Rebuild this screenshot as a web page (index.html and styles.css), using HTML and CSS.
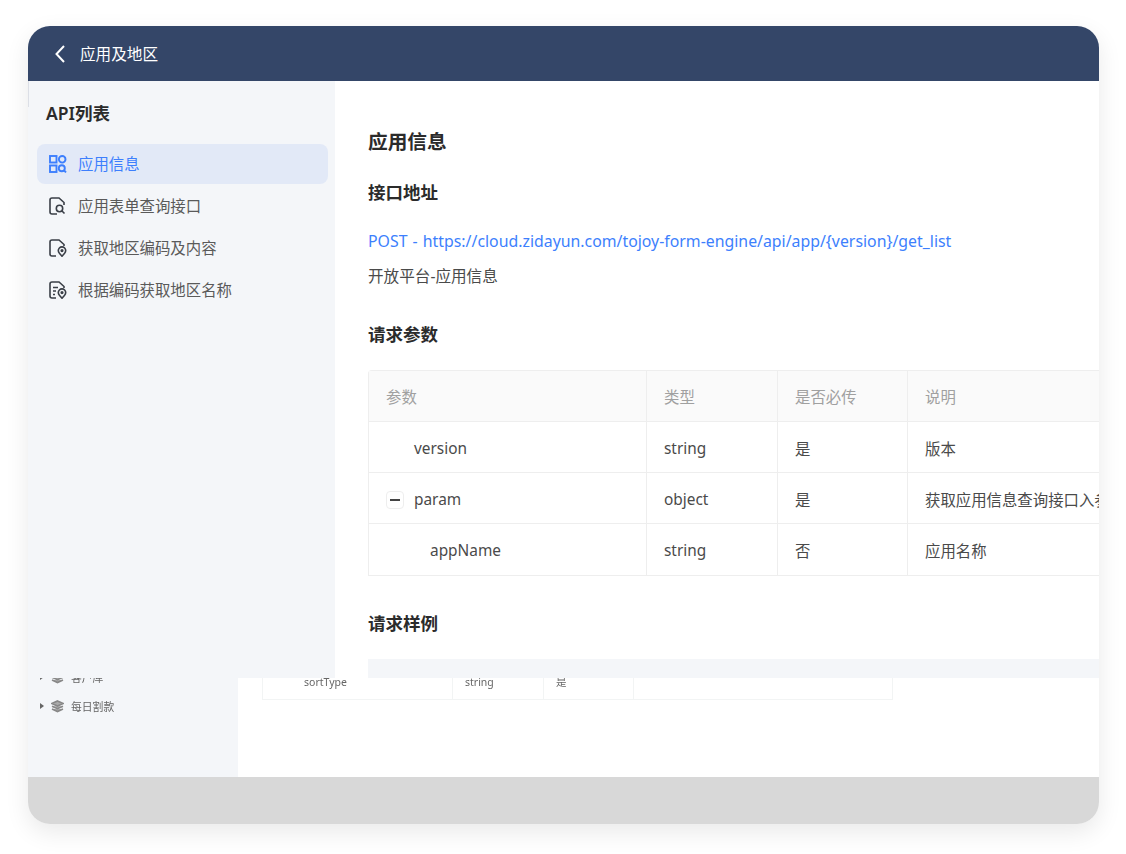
FILE: index.html
```html
<!DOCTYPE html>
<html lang="zh-CN">
<head>
  <meta charset="UTF-8" />
  <meta name="viewport" content="width=device-width, initial-scale=1.0"/>
  <title>应用及地区</title>
  <link rel="stylesheet" href="styles.css">
</head>
<body>
  <div class="window">
    <header class="topbar">
      <svg class="back-icon" width="12" height="20" viewBox="0 0 12 20"><path d="M10 2 L2.5 10 L10 18" /></svg>
      <span class="topbar-title">应用及地区</span>
    </header>

    <div class="content">
      <aside class="sidebar">
        <h2 class="sidebar-title">API列表</h2>
        <nav class="api-list">
          <a class="api-item active">
            <svg class="api-icon" width="18" height="18" viewBox="0 0 18 18">
              <rect x="1" y="1" width="6.5" height="6.5" />
              <circle cx="13.2" cy="4.3" r="3.3" />
              <rect x="1" y="10.5" width="6.5" height="6.5" />
              <circle cx="12.8" cy="13.2" r="3" />
              <path d="M15 15.4 L17 17.4" />
            </svg>
            <span class="api-label">应用信息</span>
          </a>
          <a class="api-item">
            <svg class="api-icon" width="18" height="18" viewBox="0 0 18 18">
              <path d="M8 17 H3 Q1 17 1 15 V3 Q1 1 3 1 H10 L15 5.5 V8" />
              <circle cx="10.5" cy="11.5" r="3.2" />
              <path d="M13 14 L15.5 16.5" />
            </svg>
            <span class="api-label">应用表单查询接口</span>
          </a>
          <a class="api-item">
            <svg class="api-icon" width="18" height="18" viewBox="0 0 18 18">
              <path d="M7 17 H3 Q1 17 1 15 V3 Q1 1 3 1 H10 L15 5.5 V7" />
              <path d="M13 17.2 L10.4 14.2 A3.7 3.7 0 1 1 15.6 14.2 Z" />
              <circle cx="13" cy="11.6" r="0.8" />
            </svg>
            <span class="api-label">获取地区编码及内容</span>
          </a>
          <a class="api-item">
            <svg class="api-icon" width="18" height="18" viewBox="0 0 18 18">
              <path d="M7 17 H3 Q1 17 1 15 V3 Q1 1 3 1 H10 L15 5.5 V7" />
              <path d="M4 6.5 H9 M4 10 H7 M4 13.5 H6" />
              <path d="M13 17.2 L10.4 14.2 A3.7 3.7 0 1 1 15.6 14.2 Z" />
              <circle cx="13" cy="11.6" r="0.8" />
            </svg>
            <span class="api-label">根据编码获取地区名称</span>
          </a>
        </nav>
      </aside>

      <main class="doc">
        <h1 class="doc-title">应用信息</h1>
        <h3 class="section-title">接口地址</h3>
        <p class="api-url">POST - https://cloud.zidayun.com/tojoy-form-engine/api/app/{version}/get_list</p>
        <p class="api-desc">开放平台-应用信息</p>

        <h3 class="section-title params-title">请求参数</h3>
        <table class="param-table">
          <thead>
            <tr><th class="col-name">参数</th><th class="col-type">类型</th><th class="col-req">是否必传</th><th class="col-desc">说明</th></tr>
          </thead>
          <tbody>
            <tr><td class="indent-1">version</td><td>string</td><td>是</td><td>版本</td></tr>
            <tr>
              <td><span class="collapse-btn"></span>param</td>
              <td>object</td><td>是</td><td>获取应用信息查询接口入参</td>
            </tr>
            <tr><td class="indent-2">appName</td><td>string</td><td>否</td><td>应用名称</td></tr>
          </tbody>
        </table>

        <h3 class="section-title sample-title">请求样例</h3>
        <div class="code-block"></div>
      </main>
    </div>

    <div class="under">
      <div class="under-side">
        <div class="tree-row tree-clipped">
          <span class="tree-arrow"></span>
          <svg class="tree-icon" width="13" height="13" viewBox="0 0 13 13"><path d="M6.5 1 L12 3.5 L6.5 6 L1 3.5 Z M1 6.2 L6.5 8.7 L12 6.2 M1 9 L6.5 11.5 L12 9" /></svg>
          客户库
        </div>
        <div class="tree-row">
          <span class="tree-arrow"></span>
          <svg class="tree-icon" width="13" height="13" viewBox="0 0 13 13"><path d="M6.5 1 L12 3.5 L6.5 6 L1 3.5 Z M1 6.2 L6.5 8.7 L12 6.2 M1 9 L6.5 11.5 L12 9" /></svg>
          每日割款
        </div>
      </div>
      <div class="under-main">
        <div class="under-table">
          <span class="under-cell cell-a">sortType</span>
          <span class="under-cell cell-b">string</span>
          <span class="under-cell cell-c">是</span>
          <span class="under-cell cell-d"></span>
        </div>
      </div>
    </div>

    <div class="bottombar"></div>
  </div>
</body>
</html>
```

FILE: styles.css
```css
:root {
  --navy: #344668;
  --side: #f4f6f9;
  --blue: #3d7ffd;
  --text: #2b2b2b;
  --line: #eeeeee;
}

* {
  margin: 0;
  padding: 0;
  box-sizing: border-box;
  font-family: "Noto Sans", "Noto Sans CJK SC", sans-serif;
}

body {
  background: white;
  width: 1126px;
  height: 854px;
  padding: 26px 27px 30px 28px;
  overflow: hidden;
}

.window {
  height: 798px;
  display: flex;
  flex-direction: column;
  background: white;
  border-radius: 22px;
  box-shadow: 0 8px 24px rgba(0, 0, 0, 0.09);
  overflow: hidden;
}

.topbar {
  flex: none;
  height: 55px;
  background: var(--navy);
  color: white;
  display: flex;
  align-items: center;
  padding-left: 26px;
  gap: 14px;
}

.back-icon path {
  fill: none;
  stroke: white;
  stroke-width: 2;
}

.topbar-title {
  font-size: 15.6px;
}

.content {
  flex: none;
  height: 597px;
  display: flex;
  overflow: hidden;
}

.sidebar {
  flex: none;
  width: 307px;
  background: var(--side);
  padding: 20px 7px 0 9px;
  position: relative;
}

/* faint seam left over at the top of the screenshot's edge */
.sidebar::before {
  content: '';
  position: absolute;
  left: 0;
  top: 0;
  width: 1px;
  height: 26px;
  background: #dcdfe6;
}

.sidebar-title {
  font-size: 17.5px;
  font-weight: 600;
  color: var(--text);
  line-height: 24px;
  padding-left: 9px;
  margin-bottom: 19px;
}

.api-list {
  display: flex;
  flex-direction: column;
  gap: 2px;
}

.api-item {
  height: 40px;
  display: flex;
  align-items: center;
  gap: 11px;
  padding-left: 12px;
  border-radius: 8px;
  font-size: 15.4px;
  color: #5a5a5a;
}

.api-label {
  margin-top: -1px;
}

.api-item.active {
  background: #e2e9f7;
  color: var(--blue);
}

.api-icon * {
  fill: none;
  stroke: #3a3f47;
  stroke-width: 1.6;
}

.active .api-icon * {
  stroke: var(--blue);
  stroke-width: 1.9;
}

.doc {
  flex: 1;
  min-width: 0;
  overflow: hidden;
  padding: 46px 0 0 33px;
  color: var(--text);
}

.doc-title {
  font-size: 19.7px;
  font-weight: 600;
  line-height: 30px;
  margin-bottom: 23px;
}

.section-title {
  font-size: 17.5px;
  font-weight: 600;
  line-height: 24px;
}

.api-url {
  margin-top: 25px;
  font-size: 15.85px;
  word-spacing: 1px;
  line-height: 24px;
  color: var(--blue);
  white-space: nowrap;
}

.api-desc {
  margin-top: 11px;
  font-size: 15.6px;
  line-height: 24px;
  color: #4a4a4a;
}

.params-title {
  margin-top: 34px;
}

.param-table {
  margin-top: 24px;
  width: 800px;
  table-layout: fixed;
  border-collapse: separate;
  border-spacing: 0;
  border: 1px solid var(--line);
  border-right: none;
  border-radius: 4px 0 0 0;
  font-size: 15.4px;
  color: #4a4a4a;
}

.param-table th,
.param-table td {
  height: 51px;
  padding-left: 17px;
  text-align: left;
  font-weight: 400;
  white-space: nowrap;
  overflow: hidden;
  border-left: 1px solid var(--line);
  border-bottom: 1px solid var(--line);
}

.param-table td {
  padding-top: 2px;
}

.param-table th:first-child,
.param-table td:first-child {
  border-left: none;
}

.param-table tbody tr:last-child td {
  border-bottom: none;
}

.param-table th {
  background: #fafafa;
  color: #a0a0a0;
}

.col-name { width: 277px; }
.col-type { width: 131px; }
.col-req { width: 130px; }

.param-table td.indent-1 {
  padding-left: 45px;
}

.param-table td.indent-2 {
  padding-left: 61px;
}

.collapse-btn {
  display: inline-block;
  width: 18px;
  height: 18px;
  margin-right: 10px;
  border: 1px solid #eee;
  border-radius: 4px;
  vertical-align: -4px;
  position: relative;
}

.collapse-btn::after {
  content: '';
  position: absolute;
  left: 3px;
  top: 7px;
  width: 10px;
  height: 2px;
  background: #444;
}

.sample-title {
  margin-top: 35px;
}

.code-block {
  margin-top: 24px;
  height: 40px;
  background: var(--side);
}

.under {
  flex: none;
  height: 99px;
  display: flex;
  overflow: hidden;
}

.under-side {
  flex: none;
  width: 210px;
  background: var(--side);
  padding-left: 12px;
}

.tree-row {
  height: 28px;
  display: flex;
  align-items: center;
  gap: 7px;
  font-size: 10.8px;
  color: #666;
  filter: blur(0.6px);
}

.tree-clipped {
  margin-top: -15px;
}

.tree-row + .tree-row {
  margin-top: 1px;
}

.tree-arrow {
  width: 0;
  height: 0;
  border-left: 4px solid #666;
  border-top: 3px solid transparent;
  border-bottom: 3px solid transparent;
}

.tree-icon path {
  fill: #aaa;
  stroke: #888;
  stroke-width: 1.6;
}

.under-main {
  flex: 1;
  padding-left: 24px;
}

.under-table {
  width: 631px;
  height: 22px;
  display: flex;
  border: 1px solid #f2f4f4;
  border-top: none;
  font-size: 10.5px;
  color: #666;
  filter: blur(0.6px);
}

.under-cell {
  border-right: 1px solid #f2f4f4;
  line-height: 8px;
  white-space: nowrap;
}

.cell-a { width: 190px; padding-left: 41px; }
.cell-b { width: 91px; padding-left: 12px; }
.cell-c { width: 90px; padding-left: 12px; }
.cell-d { flex: 1; border-right: none; }

.bottombar {
  flex: 1;
  background: #d8d8d8;
}
```
